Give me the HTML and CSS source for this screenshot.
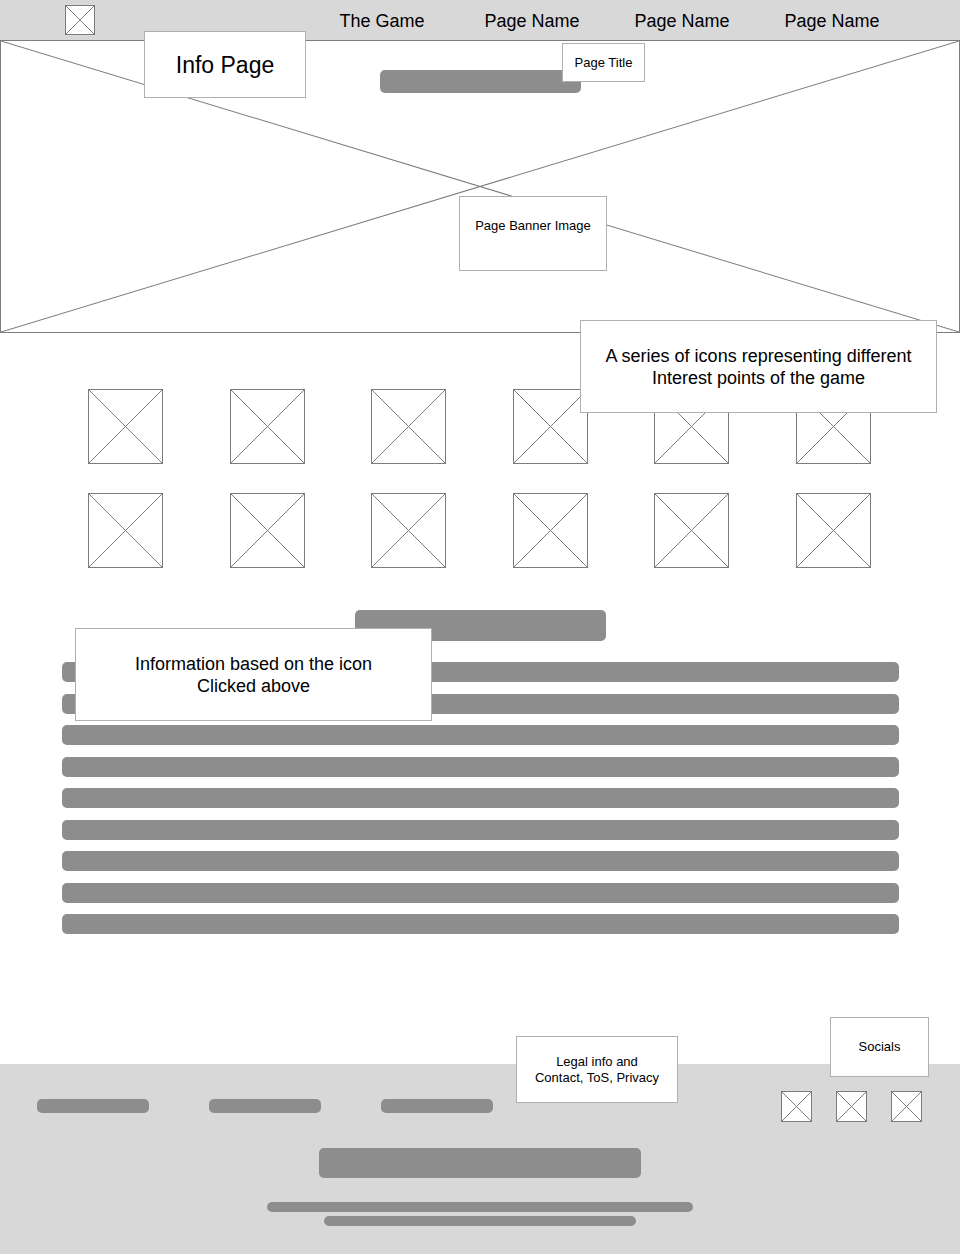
FILE: index.html
```html
<!DOCTYPE html>
<html lang="en">
<head>
<meta charset="utf-8">
<meta name="viewport" content="width=device-width, initial-scale=1">
<title>Info Page</title>
<link rel="stylesheet" href="styles.css">
</head>
<body>
<svg class="defs" aria-hidden="true">
  <symbol id="cross" viewBox="0 0 100 100" preserveAspectRatio="none">
    <path d="M0 0L100 100M100 0L0 100" vector-effect="non-scaling-stroke"/>
  </symbol>
</svg>

<header class="header">
  <a class="box logo" href="#" aria-label="Home"><svg class="cross"><use href="#cross"/></svg></a>
  <nav class="nav">
    <a class="nav-link" href="#">The Game</a>
    <a class="nav-link" href="#">Page Name</a>
    <a class="nav-link" href="#">Page Name</a>
    <a class="nav-link" href="#">Page Name</a>
  </nav>
</header>

<main>
  <section class="banner">
    <svg class="cross banner-cross" aria-hidden="true"><use href="#cross"/></svg>
    <div class="bar banner-title"></div>
    <h1 class="note note-page">Info Page</h1>
    <p class="note note-small note-title">Page Title</p>
    <p class="note note-small note-banner">Page Banner Image</p>
  </section>

  <section class="icons">
    <div class="icon-grid">
      <button class="box icon" type="button" aria-label="Interest point 1"><svg class="cross"><use href="#cross"/></svg></button>
      <button class="box icon" type="button" aria-label="Interest point 2"><svg class="cross"><use href="#cross"/></svg></button>
      <button class="box icon" type="button" aria-label="Interest point 3"><svg class="cross"><use href="#cross"/></svg></button>
      <button class="box icon" type="button" aria-label="Interest point 4"><svg class="cross"><use href="#cross"/></svg></button>
      <button class="box icon" type="button" aria-label="Interest point 5"><svg class="cross"><use href="#cross"/></svg></button>
      <button class="box icon" type="button" aria-label="Interest point 6"><svg class="cross"><use href="#cross"/></svg></button>
      <button class="box icon" type="button" aria-label="Interest point 7"><svg class="cross"><use href="#cross"/></svg></button>
      <button class="box icon" type="button" aria-label="Interest point 8"><svg class="cross"><use href="#cross"/></svg></button>
      <button class="box icon" type="button" aria-label="Interest point 9"><svg class="cross"><use href="#cross"/></svg></button>
      <button class="box icon" type="button" aria-label="Interest point 10"><svg class="cross"><use href="#cross"/></svg></button>
      <button class="box icon" type="button" aria-label="Interest point 11"><svg class="cross"><use href="#cross"/></svg></button>
      <button class="box icon" type="button" aria-label="Interest point 12"><svg class="cross"><use href="#cross"/></svg></button>
    </div>
    <p class="note note-icons">A series of icons representing different<br>Interest points of the game</p>
  </section>

  <section class="info">
    <div class="bar info-title"></div>
    <div class="info-lines">
      <div class="bar line"></div>
      <div class="bar line"></div>
      <div class="bar line"></div>
      <div class="bar line"></div>
      <div class="bar line"></div>
      <div class="bar line"></div>
      <div class="bar line"></div>
      <div class="bar line"></div>
      <div class="bar line"></div>
    </div>
    <p class="note note-info">Information based on the icon<br>Clicked above</p>
  </section>
</main>

<footer class="footer">
  <div class="footer-top">
    <nav class="legal" aria-label="Legal">
      <a class="bar legal-link" href="#" aria-label="Contact"></a>
      <a class="bar legal-link" href="#" aria-label="ToS"></a>
      <a class="bar legal-link" href="#" aria-label="Privacy"></a>
    </nav>
    <div class="socials">
      <a class="box social" href="#" aria-label="Social 1"><svg class="cross"><use href="#cross"/></svg></a>
      <a class="box social" href="#" aria-label="Social 2"><svg class="cross"><use href="#cross"/></svg></a>
      <a class="box social" href="#" aria-label="Social 3"><svg class="cross"><use href="#cross"/></svg></a>
    </div>
  </div>
  <div class="footer-bottom">
    <div class="bar footer-title"></div>
    <div class="bar footer-line"></div>
    <div class="bar footer-line footer-line-short"></div>
  </div>
  <p class="note note-small note-legal">Legal info and<br>Contact, ToS, Privacy</p>
  <p class="note note-small note-socials">Socials</p>
</footer>
</body>
</html>
```

FILE: styles.css
```css
* {
  box-sizing: border-box;
}

body {
  margin: 0;
  padding-bottom: 1px;
  background: #fff;
  color: #000;
  font-family: "Liberation Sans", Arial, Helvetica, sans-serif;
  font-size: 18px;
  line-height: 22px;
}

.defs {
  display: none;
}

/* Placeholders */
.box {
  display: block;
  flex: none;
  padding: 0;
  border: 1px solid #7c7c7c;
  background: #fff;
}

.cross {
  display: block;
  width: 100%;
  height: 100%;
  fill: none;
  stroke: #7c7c7c;
  stroke-width: 1px;
}

.bar {
  border-radius: 5px;
  background: #8d8d8d;
}

/* Annotations laid over the wireframe */
.note {
  position: absolute;
  z-index: 1;
  display: flex;
  align-items: center;
  justify-content: center;
  margin: 0;
  border: 1px solid #b0b0b0;
  background: #fff;
  text-align: center;
}

.note-small {
  font-size: 13px;
  line-height: 16px;
}

/* Header */
.header {
  display: flex;
  align-items: center;
  justify-content: space-between;
  min-height: 40px;
  padding: 0 53px 0 65px;
  background: #d8d8d8;
}

.logo {
  width: 30px;
  height: 30px;
}

.nav {
  display: flex;
  padding-top: 2px;
}

.nav-link {
  width: 150px;
  color: inherit;
  text-align: center;
  text-decoration: none;
}

/* Banner */
.banner {
  position: relative;
  display: grid;
  height: 293px;
  border: 1px solid #7c7c7c;
}

.banner-cross,
.banner-title {
  grid-area: 1 / 1;
}

.banner-title {
  justify-self: center;
  width: 201px;
  height: 23px;
  margin-top: 29px;
}

.note-page {
  top: -10px;
  left: 143px;
  width: 162px;
  height: 67px;
  font-size: 23px;
  font-weight: 400;
}

.note-title {
  top: 2px;
  left: 561px;
  width: 83px;
  height: 39px;
}

.note-banner {
  top: 155px;
  left: 458px;
  width: 148px;
  height: 75px;
  padding-bottom: 16px;
}

/* Icon grid */
.icons {
  position: relative;
  padding: 56px 89px 0 88px;
}

.icon-grid {
  display: grid;
  grid-template-columns: repeat(6, 75px);
  justify-content: space-between;
  row-gap: 29px;
}

.icon {
  height: 75px;
}

.note-icons {
  top: -13px;
  right: 23px;
  width: 357px;
  height: 93px;
}

/* Information */
.info {
  position: relative;
  padding: 42px 61px 130px 62px;
}

.info-title {
  width: 251px;
  height: 31px;
  margin: 0 auto 21px;
}

.info-lines {
  display: flex;
  flex-direction: column;
  justify-content: space-between;
  min-height: 272px;
}

.line {
  height: 20px;
}

.note-info {
  top: 60px;
  left: 75px;
  width: 357px;
  height: 93px;
}

/* Footer */
.footer {
  position: relative;
  padding: 27px 0 28px;
  background: #d8d8d8;
}

.footer-top {
  display: flex;
  align-items: center;
  justify-content: space-between;
  padding: 0 38px 0 37px;
}

.legal {
  display: flex;
  gap: 60px;
  padding-bottom: 2px;
}

.legal-link {
  width: 112px;
  height: 14px;
}

.socials {
  display: flex;
  gap: 24px;
}

.social {
  width: 31px;
  height: 31px;
}

.footer-bottom {
  display: flex;
  flex-direction: column;
  align-items: center;
  gap: 4px;
  padding-top: 26px;
}

.footer-title {
  width: 322px;
  height: 30px;
  margin-bottom: 20px;
}

.footer-line {
  width: 426px;
  height: 10px;
}

.footer-line-short {
  width: 312px;
}

.note-legal {
  top: -28px;
  left: 516px;
  width: 162px;
  height: 67px;
}

.note-socials {
  top: -47px;
  right: 31px;
  width: 99px;
  height: 60px;
}
```
